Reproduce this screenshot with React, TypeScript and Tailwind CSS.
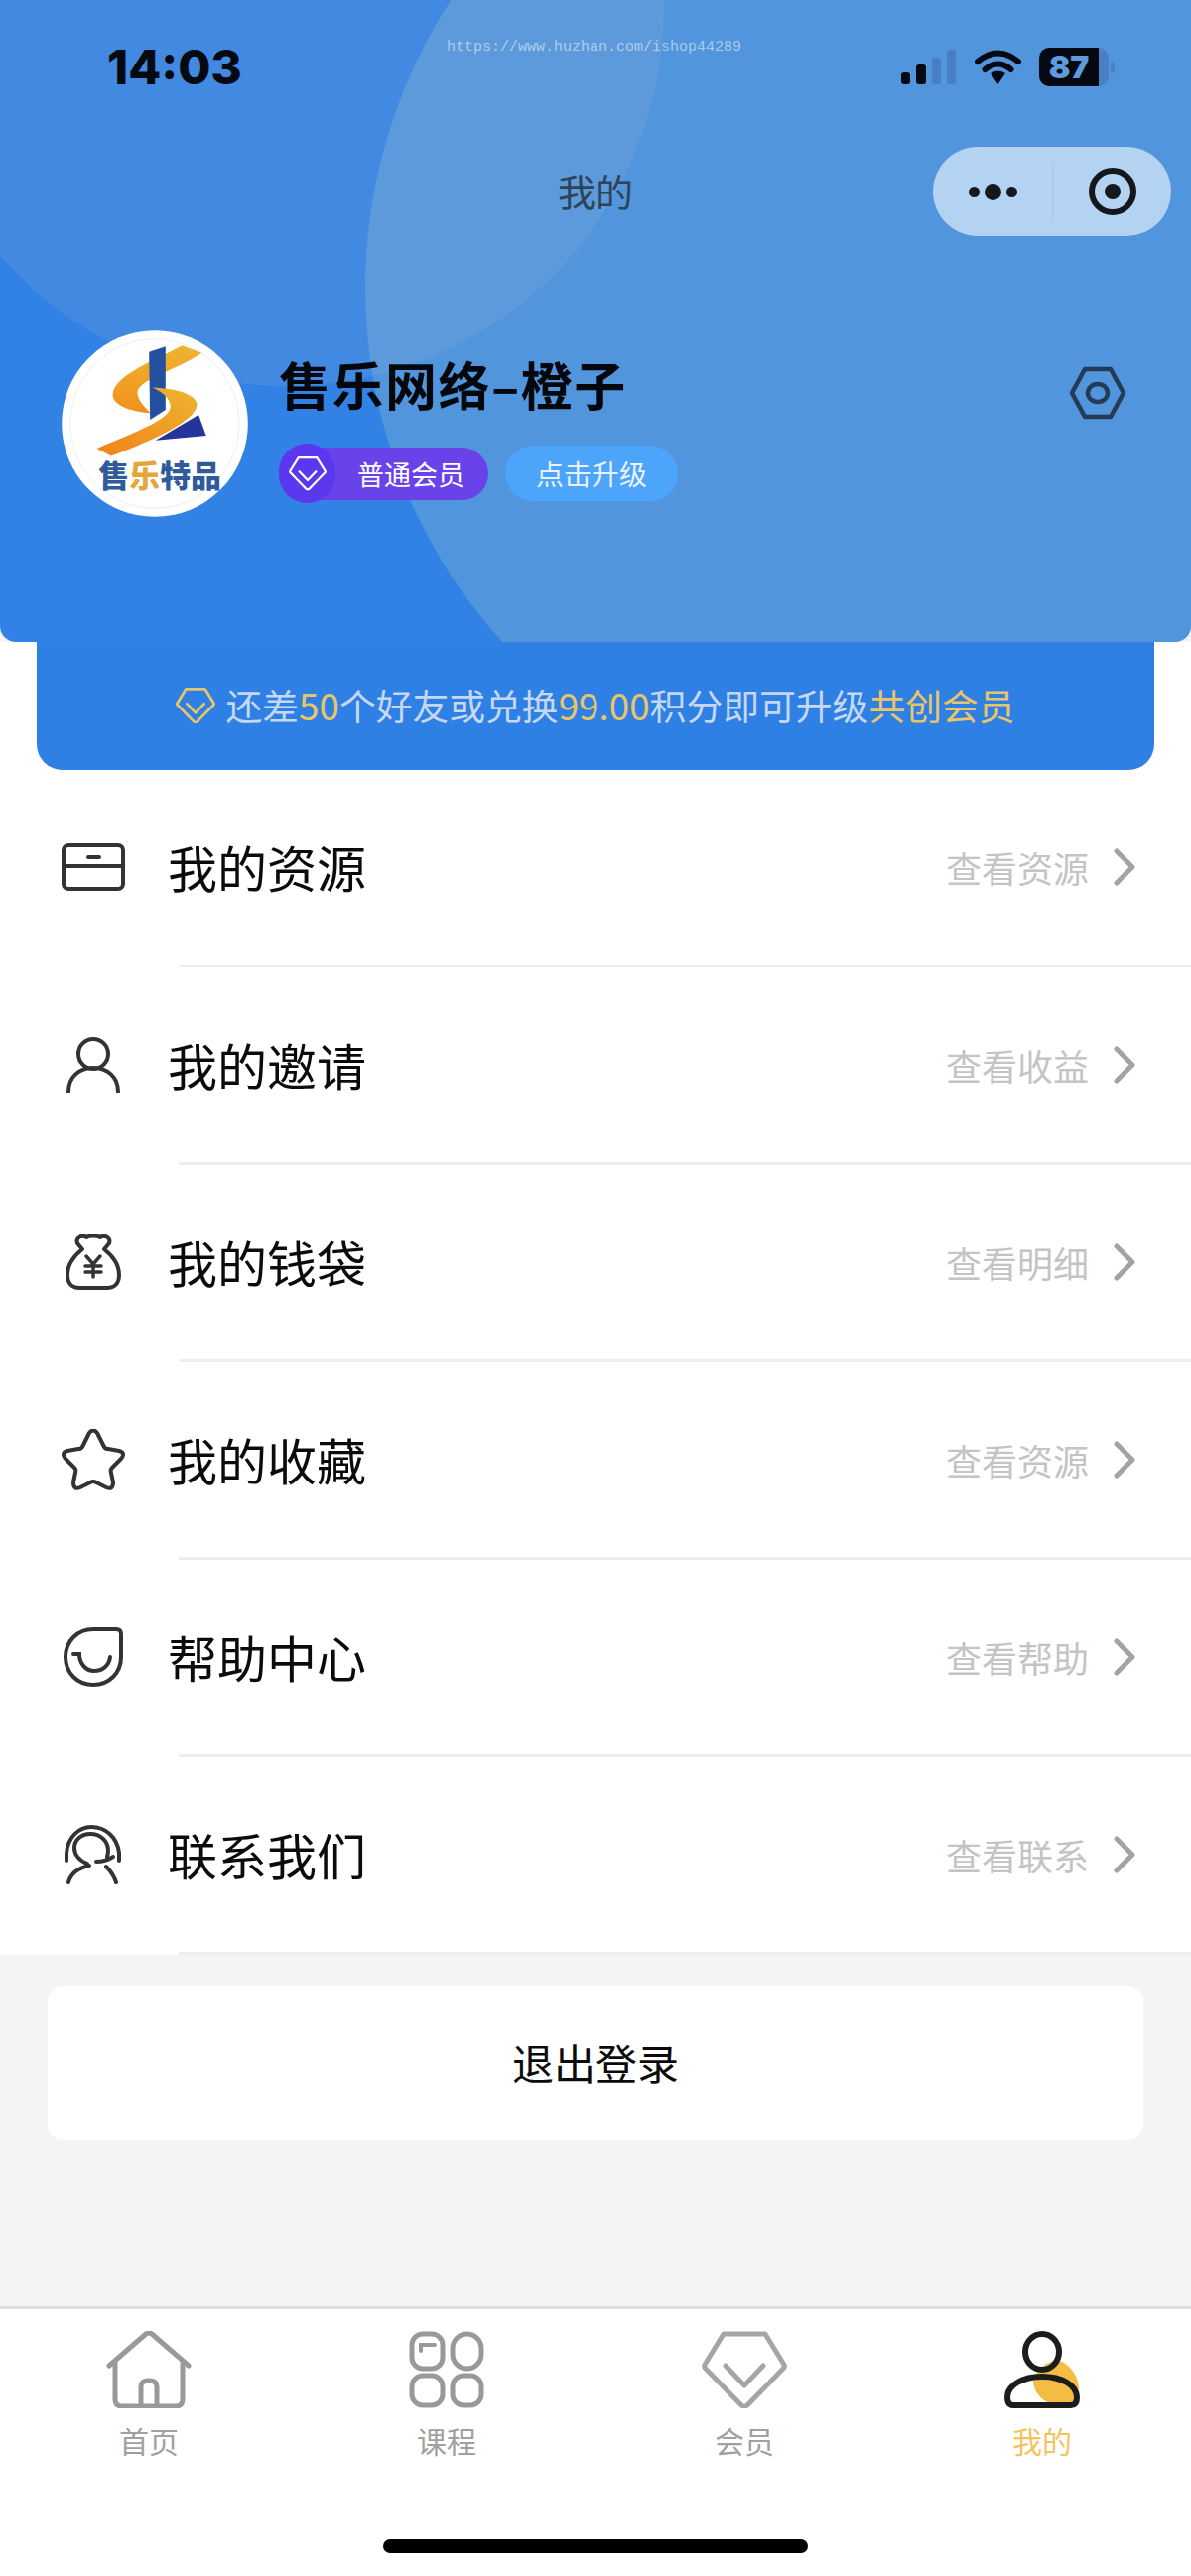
import type { ReactNode } from 'react';

const Diamond = ({ className, stroke, width = 4 }: { className: string; stroke: string; width?: number }) => (
  <svg className={className} viewBox="0 0 86 78" fill="none" stroke={stroke} strokeWidth={width} strokeLinejoin="round" strokeLinecap="round">
    <path d="M22 3H64L83 34Q84 36 82 38L46 75Q43 77 40 75L4 38Q2 36 3 34Z" />
    <path d="M24 35L43 55L62 35" />
  </svg>
);

const CardIcon = () => (
  <svg className="w-[64px] h-[48px]" viewBox="0 0 64 48" fill="none" stroke="#333" strokeWidth="4" strokeLinecap="round">
    <rect x="2" y="2" width="60" height="44" rx="5" />
    <path d="M2 23H62" />
    <path d="M27 14H38" />
  </svg>
);

const PersonIcon = () => (
  <svg className="w-[56px] h-[56px]" viewBox="0 0 56 56" fill="none" stroke="#333" strokeWidth="4" strokeLinecap="round">
    <circle cx="28" cy="17" r="15" />
    <path d="M3 55C3 40 14 31 28 31C42 31 53 40 53 55" />
  </svg>
);

const BagIcon = () => (
  <svg className="w-[56px] h-[56px]" viewBox="0 0 56 56" fill="none" stroke="#333" strokeWidth="4" strokeLinecap="round" strokeLinejoin="round">
    <path d="M17 15L12 9C10 3 17 0 21 3C24 1 32 1 35 3C39 0 46 3 44 9L39 15C48 22 54 30 54 41C54 50 49 54 42 54H14C7 54 2 50 2 41C2 30 8 22 17 15Z" />
    <path d="M21 22L28 30L35 22M28 30V43M20 32H36M20 38H36" strokeWidth="3.500" />
  </svg>
);

const StarIcon = () => (
  <svg className="w-[64px] h-[62px]" viewBox="0 0 64 62" fill="none" stroke="#333" strokeWidth="4" strokeLinejoin="round">
    <path d="M28 4Q32 -1 36 4L43 18Q44 20 47 20L58 22Q65 24 60 30L51 39Q49 41 50 44L52 54Q52 62 45 59L35 54Q32 52 29 54L19 59Q12 62 12 54L14 44Q15 41 13 39L4 30Q-1 24 6 22L17 20Q20 20 21 18Z" />
  </svg>
);

const HelpIcon = () => (
  <svg className="w-[60px] h-[60px]" viewBox="0 0 60 60" fill="none" stroke="#333" strokeWidth="4" strokeLinecap="round">
    <path d="M30 2H53Q58 2 58 7V30C58 46 46 58 30 58C14 58 2 46 2 30C2 14 14 2 30 2Z" />
    <path d="M10 27H16C16 36 22 44 31 44C40 44 46 38 47 30" />
  </svg>
);

const ContactIcon = () => (
  <svg className="w-[60px] h-[60px]" viewBox="0 0 60 60" fill="none" stroke="#333" strokeWidth="4" strokeLinecap="round">
    <path d="M3 36V29C4 12 16 2 28 2C42 2 54 12 56 28V36" />
    <path d="M24 39C16 36 11 30 11 23C11 15 18 9 27 9C37 9 45 16 45 26C45 28 44.500 30 44 32" />
    <path d="M33 37C38 37 44 36 50 32" />
    <path d="M5 58C7 50 13 44 26 41" />
    <path d="M43 42C48 47 51 52 53 58" />
  </svg>
);

const Chevron = () => (
  <svg className="w-[24px] h-[38px]" viewBox="0 0 24 38" fill="none" stroke="#a3a3a3" strokeWidth="5" strokeLinecap="round" strokeLinejoin="round">
    <path d="M4 3L20 19L4 35" />
  </svg>
);

const HomeIcon = () => (
  <svg className="w-[86px] h-[78px]" viewBox="0 0 86 78" fill="none" stroke="#999" strokeWidth="5" strokeLinecap="round" strokeLinejoin="round">
    <path d="M3 35L40 3Q43 1 46 3L83 35" />
    <path d="M9 32V69Q9 76 16 76H70Q77 76 77 69V32" />
    <path d="M35 76V56Q35 50 43 50Q51 50 51 56V76" />
  </svg>
);

const GridIcon = () => (
  <svg className="w-[76px] h-[78px]" viewBox="0 0 76 78" fill="none" stroke="#999" strokeWidth="5" strokeLinecap="round">
    <rect x="3" y="3" width="31" height="35" rx="11" />
    <rect x="44" y="3" width="29" height="35" rx="14.500" />
    <rect x="3" y="45" width="31" height="30" rx="11" />
    <rect x="44" y="45" width="29" height="30" rx="11" />
    <path d="M12 20V14H26" strokeWidth="4" />
  </svg>
);

const MeIcon = () => (
  <svg className="w-[76px] h-[78px]" viewBox="0 0 76 78" fill="none">
    <path d="M50 30C62 28 75 44 75 58C75 72 62 78 50 74C36 72 26 56 30 46C34 38 42 32 50 30Z" fill="#f2bd42" />
    <ellipse cx="38" cy="21" rx="17" ry="18" stroke="#1c1c1c" strokeWidth="6" fill="none" />
    <path d="M3 67C3 55 18 46 38 46C58 46 73 55 73 67Q73 75 67 75H9Q3 75 3 67Z" stroke="#1c1c1c" strokeWidth="6" />
  </svg>
);

const LogoMark = () => (
  <svg className="w-[188px] h-[188px]" viewBox="65 40 565 564">
    <defs>
      <linearGradient id="bandTop" x1="0" y1="0" x2="0" y2="1">
        <stop offset="0" stopColor="#edb531" />
        <stop offset="1" stopColor="#f1901c" />
      </linearGradient>
      <linearGradient id="bandLow" x1="1" y1="0" x2="0" y2="1">
        <stop offset="0" stopColor="#eeb52f" />
        <stop offset="1" stopColor="#f0821b" />
      </linearGradient>
    </defs>
    <circle cx="347.500" cy="322" r="282" fill="#fff" />
    <circle cx="347.500" cy="322" r="256" fill="none" stroke="#dfe6f2" strokeWidth="2" />
    <path d="M480 295L503 358L350 372Z" fill="#23359a" />
    <path d="M430 85L490 108C400 165 300 190 295 225C293 250 320 275 335 290C270 285 220 265 220 235C220 175 350 130 430 85Z" fill="url(#bandTop)" />
    <path d="M330 105L380 88V280L333 310Z" fill="#24509f" />
    <path d="M340 212C420 215 475 235 475 265C475 310 350 370 215 420L172 397C280 350 395 310 395 270C395 245 370 225 340 212Z" fill="url(#bandLow)" />
    <text x="363" y="513" textAnchor="middle" fontSize="93" fontWeight="900" fontFamily="'Noto Sans CJK SC', sans-serif" fill="#2f5a9c">
      售<tspan fill="#e3a63a">乐</tspan>特品
    </text>
  </svg>
);

const rows: { icon: ReactNode; label: string; hint: string }[] = [
  { icon: <CardIcon />, label: '我的资源', hint: '查看资源' },
  { icon: <PersonIcon />, label: '我的邀请', hint: '查看收益' },
  { icon: <BagIcon />, label: '我的钱袋', hint: '查看明细' },
  { icon: <StarIcon />, label: '我的收藏', hint: '查看资源' },
  { icon: <HelpIcon />, label: '帮助中心', hint: '查看帮助' },
  { icon: <ContactIcon />, label: '联系我们', hint: '查看联系' },
];

const tabs: { icon: ReactNode; label: string; active?: boolean }[] = [
  { icon: <HomeIcon />, label: '首页' },
  { icon: <GridIcon />, label: '课程' },
  { icon: <Diamond className="w-[86px] h-[78px]" stroke="#a5a5a5" width={5} />, label: '会员' },
  { icon: <MeIcon />, label: '我的', active: true },
];

export default function App() {
  return (
    <div className="w-[1200px] h-[2596px] flex flex-col bg-[#f4f4f4] overflow-hidden font-['Noto_Sans_CJK_SC',sans-serif]">
      {/* Header */}
      <div className="relative h-[647px] shrink-0 overflow-hidden rounded-b-[16px] bg-[#3182e4]">
        {/* background blobs */}
        <div className="absolute left-[368px] top-[-240px] w-[1060px] h-[1060px] rounded-full bg-[#d1e1c1]/20" />
        <div className="absolute left-[-93px] top-[-373px] w-[762px] h-[762px] rounded-full bg-[#d1d2d0]/10" />

        {/* watermark */}
        <div className="absolute left-[450px] top-[39px] font-['Liberation_Mono',monospace] text-[15px] leading-[18px] text-white/50">https://www.huzhan.com/ishop44289</div>

        <div className="relative flex flex-col">
          {/* Status bar */}
          <div className="flex items-center justify-between pl-[108px] pr-[77px] pt-[48px] h-[87px]">
            <span className="font-['Inter',sans-serif] font-extrabold text-[48px] leading-none text-[#050a12]">14:03</span>
            <div className="flex items-center">
              <div className="flex items-end gap-[6px] h-[35px]">
                <div className="w-[9px] h-[12px] rounded-[3px] bg-[#050a12]" />
                <div className="w-[10px] h-[20px] rounded-[3px] bg-[#050a12]" />
                <div className="w-[9px] h-[27px] rounded-[3px] bg-[#4680c2]" />
                <div className="w-[9px] h-[35px] rounded-[3px] bg-[#4680c2]" />
              </div>
              <svg className="w-[47px] h-[36px] ml-[19px]" viewBox="0 0 47 36" fill="none" stroke="#050a12" strokeWidth="6" strokeLinecap="round">
                <path d="M3 12Q23.500 -5 44 12" />
                <path d="M10.500 20Q23.500 9 36.500 20" />
                <path d="M16 24Q23.500 19 31 24L23.500 35Z" fill="#050a12" stroke="none" />
              </svg>
              <div className="flex h-[39px] w-[70px] ml-[18px] rounded-[10px] overflow-hidden">
                <div className="w-[60px] bg-[#050a12] flex items-center justify-center font-['Inter',sans-serif] font-black text-[32px] leading-none text-[#5d9bdf]">87</div>
                <div className="flex-1 bg-[#4a80c4]" />
              </div>
              <div className="w-[4px] h-[12px] ml-[2px] rounded-r-full bg-[#4a80c4]" />
            </div>
          </div>

          {/* Nav */}
          <div className="grid grid-cols-[240px_1fr_240px] items-center h-[90px] mt-[61px] px-[20px]">
            <div />
            <div className="text-center text-[38px] leading-none pb-[3px] text-[#2d4458]">我的</div>
            <div className="flex h-[90px] rounded-full bg-[#b4d2f1] items-center">
              <div className="w-[120px] flex items-center justify-center gap-[5px]">
                <div className="w-[11px] h-[11px] rounded-full bg-[#14181d]" />
                <div className="w-[17px] h-[17px] rounded-full bg-[#14181d]" />
                <div className="w-[11px] h-[11px] rounded-full bg-[#14181d]" />
              </div>
              <div className="w-[1px] h-[60px] bg-[#a5c5e6]" />
              <div className="flex-1 flex items-center justify-center">
                <div className="w-[48px] h-[48px] rounded-full border-[6px] border-[#14181d] flex items-center justify-center">
                  <div className="w-[16px] h-[16px] rounded-full bg-[#14181d]" />
                </div>
              </div>
            </div>
          </div>

          {/* Profile */}
          <div className="flex items-start pl-[62px] pr-[65px] mt-[95px]">
            <LogoMark />
            <div className="ml-[31px] flex flex-col items-start pt-[26px]">
              <div className="text-[52px] leading-[56px] tracking-[1.5px] font-bold text-[#04070c]">售乐网络–橙子</div>
              <div className="flex items-center gap-[17px] mt-[34px]">
                <div className="flex items-center h-[53px] w-[211px] rounded-full bg-[#6a42ea]">
                  <div className="flex items-center justify-center w-[57px] h-[60px] shrink-0 rounded-full bg-[#5b38f0]">
                    <Diamond className="w-[38px] h-[36px]" stroke="#fff" width={5} />
                  </div>
                  <span className="ml-[22px] text-[27px] leading-none text-white">普通会员</span>
                </div>
                <div className="flex items-center justify-center w-[174px] h-[56px] rounded-full bg-[#4da4fb] text-[28px] leading-none text-[#e8f3ff]">点击升级</div>
              </div>
            </div>
            <svg className="ml-auto mt-[36px] w-[58px] h-[54px]" viewBox="0 0 58 54" fill="none" stroke="#243a55" strokeWidth="4.500" strokeLinejoin="round">
              <path d="M16 3H42L55 27L42 51H16L3 27Z" />
              <ellipse cx="29" cy="27" rx="10" ry="9" />
            </svg>
          </div>
        </div>
      </div>

      {/* Banner + list */}
      <div className="shrink-0 bg-white">
        <div className="mx-[37px] h-[129px] pb-[2px] rounded-b-[26px] bg-[#2f80e4] flex items-center justify-center text-[36.800px] leading-none text-[#c5d8f0]">
          <Diamond className="w-[40px] h-[36px] mr-[10px]" stroke="#e8c568" width={6} />
          <span>
            还差<span className="text-[#e8c568]">50</span>个好友或兑换<span className="text-[#e8c568]">99.00</span>积分即可升级<span className="text-[#e8c568]">共创会员</span>
          </span>
        </div>

        {rows.map((row) => (
          <div key={row.label}>
            <div className="flex items-center h-[196px] pr-[55px]">
              <div className="w-[188px] shrink-0 flex justify-center">{row.icon}</div>
              <span className="ml-[-19px] pb-[3px] text-[50px] leading-none text-[#0b0b0b]">{row.label}</span>
              <span className="ml-auto text-[36px] leading-none text-[#c4c4c4]">{row.hint}</span>
              <div className="ml-[24px]"><Chevron /></div>
            </div>
            <div className="ml-[180px] h-[3px] bg-[#eeeeee]" />
          </div>
        ))}
      </div>

      {/* Logout */}
      <div className="flex-1 pt-[31px] px-[48px]">
        <div className="h-[156px] rounded-[16px] bg-white flex items-center justify-center pb-[2px] text-[42px] leading-none text-[#0b0b0b]">退出登录</div>
      </div>

      {/* Tab bar */}
      <div className="h-[272px] shrink-0 border-t-[3px] border-[#dddddd] bg-white flex flex-col">
        <div className="grid grid-cols-4 pt-[22px]">
          {tabs.map((tab) => (
            <div key={tab.label} className="flex flex-col items-center">
              <div className="h-[78px] flex items-center">{tab.icon}</div>
              <span className={`mt-[17px] text-[30px] leading-none ${tab.active ? 'text-[#f3c45e]' : 'text-[#a0a0a0]'}`}>{tab.label}</span>
            </div>
          ))}
        </div>
        <div className="mt-auto mb-[23px] mx-auto w-[428px] h-[14px] rounded-full bg-black" />
      </div>
    </div>
  );
}
